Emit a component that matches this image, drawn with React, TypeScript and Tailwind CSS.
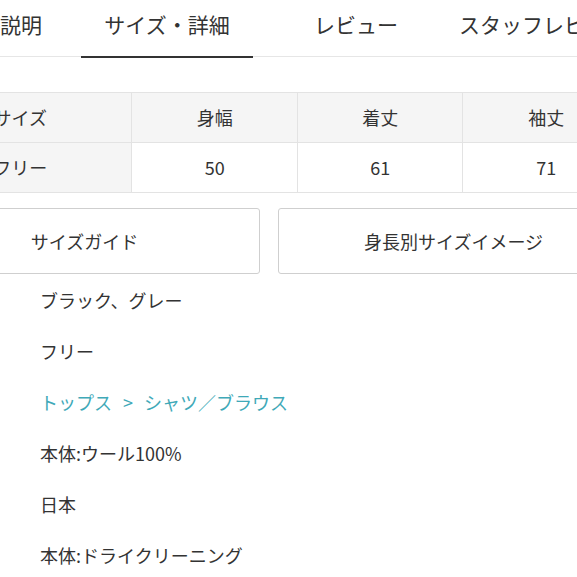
import React from 'react';

const tabs = [
  { label: '商品説明', cls: 'w-[162px] justify-center' },
  { label: 'サイズ・詳細', cls: 'w-[172px] justify-center', active: true },
  { label: 'レビュー', cls: 'w-[206px] justify-center' },
  { label: 'スタッフレビュー', cls: 'w-[200px] justify-start' },
];

const sizeHeads = ['身幅', '着丈', '袖丈'];
const sizeVals = ['50', '61', '71'];

const details: { text: React.ReactNode; key: string; link?: boolean }[] = [
  { key: 'color', text: 'ブラック、グレー' },
  { key: 'size', text: 'フリー' },
  {
    key: 'cat',
    link: true,
    text: (
      <>
        トップス<span className="mx-[11px]">&gt;</span>シャツ／ブラウス
      </>
    ),
  },
  { key: 'mat', text: '本体:ウール100%' },
  { key: 'origin', text: '日本' },
  { key: 'care', text: '本体:ドライクリーニング' },
];

const App: React.FC = () => {
  return (
    <div
      className="w-full h-[577px] overflow-hidden bg-white text-[#333]"
      style={{ fontFamily: '"Noto Sans CJK JP", "Noto Sans", sans-serif' }}
    >
      {/* Tabs */}
      <div className="h-[57px] border-b border-[#e6e6e6]">
        <div className="flex h-full ml-[-81px] w-[760px]">
          {tabs.map((t) => (
            <div key={t.label} className={`relative flex items-center h-full shrink-0 text-[21px] pb-[6px] ${t.cls}`}>
              <span>{t.label}</span>
              {t.active && <span className="absolute left-0 right-0 bottom-[-2px] h-[2px] bg-[#333]" />}
            </div>
          ))}
        </div>
      </div>

      <div className="ml-[-91px] w-[720px]">
        {/* Size table */}
        <div className="mt-[35px] border-t border-b border-[#e3e3e3] text-[18px]">
          <div className="flex h-[50px] bg-[#f5f5f5] border-b border-[#e3e3e3]">
            <div className="w-[224px] flex items-center justify-center border-r border-[#e3e3e3]">サイズ</div>
            {sizeHeads.map((h, i) => (
              <div key={h} className={`w-[166px] flex items-center justify-center ${i < 2 ? 'border-r border-[#e3e3e3]' : ''}`}>{h}</div>
            ))}
          </div>
          <div className="flex h-[49px]">
            <div className="w-[224px] flex items-center justify-center bg-[#f5f5f5] border-r border-[#e3e3e3]">フリー</div>
            {sizeVals.map((v, i) => (
              <div key={v} className={`w-[166px] flex items-center justify-center ${i < 2 ? 'border-r border-[#e3e3e3]' : ''}`}>{v}</div>
            ))}
          </div>
        </div>

        {/* Buttons */}
        <div className="mt-[15px] flex gap-[18px]">
          <button className="flex-1 h-[66px] border border-[#cfcfcf] rounded-[3px] bg-white text-[18px] text-[#333]">サイズガイド</button>
          <button className="flex-1 h-[66px] border border-[#cfcfcf] rounded-[3px] bg-white text-[18px] text-[#333]">身長別サイズイメージ</button>
        </div>
      </div>

      {/* Details */}
      <div className="mt-[1px] pl-[40px]">
        {details.map((d) => (
          <div key={d.key} className={`h-[51px] flex items-center text-[18px] ${d.link ? 'text-[#3fa9b8]' : 'text-[#333]'}`}>
            {d.text}
          </div>
        ))}
      </div>
    </div>
  );
};

export default App;
